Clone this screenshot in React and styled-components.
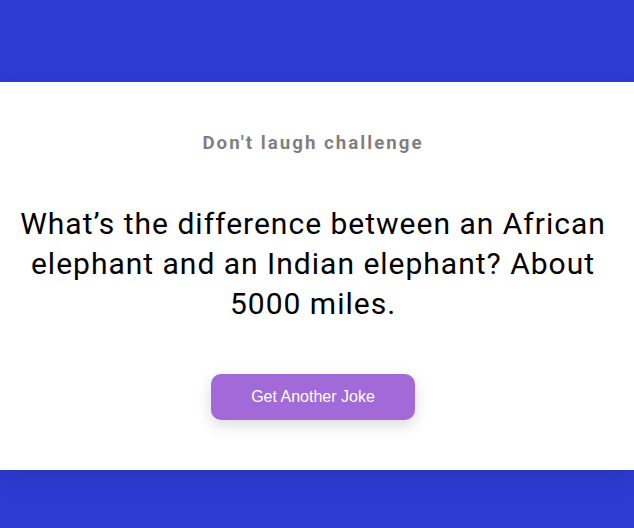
import React from "react";
import styled, { createGlobalStyle } from "styled-components";

const Global = createGlobalStyle`
  * { box-sizing: border-box; }
  html, body { margin: 0; padding: 0; }
  body {
    background: #2e3bd3;
    font-family: Roboto, "Liberation Sans", sans-serif;
  }
`;

const Page = styled.div`
  min-height: 100vh;
  padding-top: 82px;
  display: flex;
  flex-direction: column;
  align-items: center;
  overflow: hidden;
`;

const Card = styled.div`
  width: 100%;
  background: #fff;
  box-shadow: 0 10px 20px rgba(0, 0, 0, 0.1);
  padding: 50px 28px 50px 20px;
  text-align: center;
`;

const Title = styled.h3`
  margin: 0;
  font-size: 18.72px;
  font-weight: 700;
  line-height: 22px;
  letter-spacing: 2px;
  color: #000;
  opacity: 0.5;
`;

const Joke = styled.div`
  font-size: 30px;
  letter-spacing: 1px;
  line-height: 40px;
  margin: 50px auto;
  max-width: 600px;
  color: #000;
`;

const Button = styled.button`
  background: #a26ad8;
  color: #fff;
  border: 0;
  border-radius: 10px;
  box-shadow: 0 5px 15px rgba(0, 0, 0, 0.15);
  padding: 14px 40px;
  font-family: "Liberation Sans", Arial, sans-serif;
  font-size: 16px;
  line-height: 18px;
  cursor: pointer;
`;

export default function App() {
  return (
    <>
      <Global />
      <Page>
        <Card>
          <Title>Don't laugh challenge</Title>
          <Joke>
            What’s the difference between an African elephant and an Indian
            elephant? About 5000 miles.
          </Joke>
          <Button>Get Another Joke</Button>
        </Card>
      </Page>
    </>
  );
}
